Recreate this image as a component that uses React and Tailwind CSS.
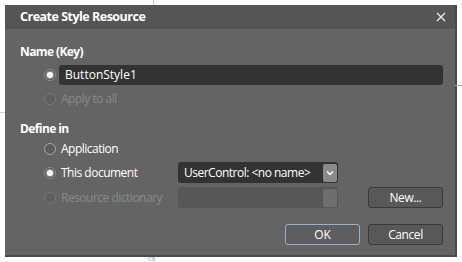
import React from "react";

const font = { fontFamily: '"Open Sans", "Noto Sans", sans-serif' };

function Radio({ checked, disabled }) {
  if (checked) {
    return (
      <span className="flex h-[12px] w-[12px] shrink-0 items-center justify-center rounded-full border border-[#8c8c8c] bg-[#3e3e3e]">
        <span className="h-[6px] w-[6px] rounded-full bg-white shadow-[0_0_2px_1px_rgba(255,255,255,0.6)]" />
      </span>
    );
  }
  return (
    <span
      className={
        "h-[12px] w-[12px] shrink-0 rounded-full border " +
        (disabled ? "border-[#787878] bg-[#5f5f5f]" : "border-[#a8a8a8] bg-[#5c5c5c]")
      }
    />
  );
}

function RadioRow({ checked, disabled, label, className = "" }) {
  return (
    <div className={"flex items-center gap-[5px] " + className}>
      <Radio checked={checked} disabled={disabled} />
      <span className={"tracking-[-0.5px] " + (disabled ? "text-[#8a8a8a]" : "text-white")}>{label}</span>
    </div>
  );
}

export default function App() {
  return (
    <div className="relative h-[262px] w-[462px] overflow-hidden bg-white text-[12px]" style={font}>
      <div className="absolute left-[153px] top-0 h-[5px] w-px bg-[#b8c8e0]" />
      <div className="absolute left-0 top-[112px] h-px w-[5px] bg-[#c8d4e4]" />
      <div className="absolute right-0 top-[85px] h-px w-[7px] bg-[#9fb4d4]" />
      <div className="absolute left-[148px] top-[255px] text-[7px] leading-none text-[#8fa6c8]">ca</div>
      <div className="ml-[5px] mt-[5px] flex h-[252px] w-[452px] flex-col border-b-2 border-r-2 border-[#4a4a4a] bg-[#646464]">
        <div className="flex h-[24px] items-center justify-between bg-[#555555] pl-[15px] pr-[9px]">
          <span className="text-[12.5px] font-bold tracking-[-0.5px] text-white">Create Style Resource</span>
          <svg width="10" height="10" viewBox="0 0 10 10">
            <path d="M1 1 L9 9 M9 1 L1 9" stroke="#e8e8e8" strokeWidth="1.4" />
          </svg>
        </div>
        <div className="flex flex-1 flex-col pl-[15px] pr-[12px]">
          <div className="mt-[14px] font-bold tracking-[-0.6px] text-white">Name (Key)</div>
          <div className="mt-[4px] flex items-center pl-[24px]">
            <Radio checked />
            <div className="ml-[3px] flex h-[20px] flex-1 items-center rounded-[3px] bg-[#333333] pl-[6px] text-white">
              ButtonStyle1
            </div>
          </div>
          <RadioRow disabled label="Apply to all" className="mt-[5px] h-[18px] pl-[24px]" />
          <div className="mt-[12px] font-bold tracking-[-0.6px] text-white">Define in</div>
          <RadioRow label="Application" className="mt-[2px] h-[18px] pl-[24px]" />
          <div className="mt-[4px] flex h-[21px] items-center pl-[24px]">
            <RadioRow checked label="This document" className="w-[134px]" />
            <div className="flex h-[21px] w-[160px] items-center justify-between rounded-[3px] bg-[#333333] pl-[6px] pr-[1px] text-white">
              <span className="tracking-[-0.5px]">UserControl: &lt;no name&gt;</span>
              <span className="flex h-[18px] w-[14px] items-center justify-center rounded-[2px] bg-[#8a8a8a]">
                <svg width="8" height="6" viewBox="0 0 8 6">
                  <path d="M1 1.5 L4 4.5 L7 1.5" stroke="#ffffff" strokeWidth="1.5" fill="none" />
                </svg>
              </span>
            </div>
          </div>
          <div className="mt-[4px] flex h-[21px] items-center pl-[24px]">
            <RadioRow disabled label="Resource dictionary" className="w-[134px]" />
            <div className="flex h-[21px] w-[160px] items-center justify-end rounded-[3px] bg-[#575757] pr-[1px]">
              <span className="h-[18px] w-[14px] rounded-[2px] bg-[#6e6e6e]" />
            </div>
            <div className="ml-auto flex h-[21px] w-[75px] items-center justify-center rounded-[3px] border border-[#3a3a3a] bg-[#585858] tracking-[-0.4px] text-white">
              New...
            </div>
          </div>
          <div className="mt-[16px] flex justify-end gap-[8px]">
            <div className="flex h-[21px] w-[75px] items-center justify-center rounded-[3px] border border-[#9ab0c4] bg-[#5e5e5e] text-white">
              OK
            </div>
            <div className="flex h-[21px] w-[75px] items-center justify-center rounded-[3px] border border-[#3a3a3a] bg-[#585858] tracking-[-0.4px] text-white">
              Cancel
            </div>
          </div>
        </div>
      </div>
    </div>
  );
}
